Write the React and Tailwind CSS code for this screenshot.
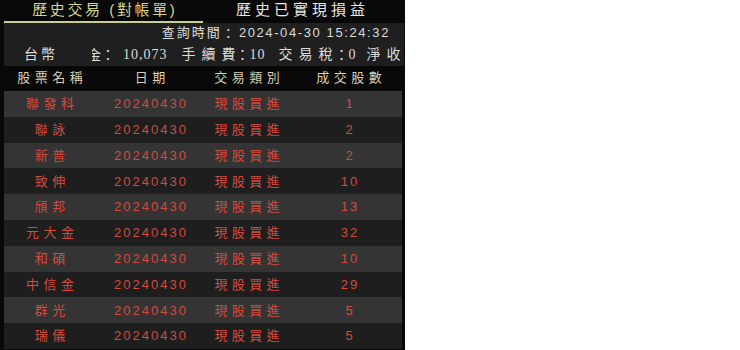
import React from 'react';

const rows = [
  { name: '聯發科', date: '20240430', type: '現股買進', qty: '1' },
  { name: '聯詠', date: '20240430', type: '現股買進', qty: '2' },
  { name: '新普', date: '20240430', type: '現股買進', qty: '2' },
  { name: '致伸', date: '20240430', type: '現股買進', qty: '10' },
  { name: '頎邦', date: '20240430', type: '現股買進', qty: '13' },
  { name: '元大金', date: '20240430', type: '現股買進', qty: '32' },
  { name: '和碩', date: '20240430', type: '現股買進', qty: '10' },
  { name: '中信金', date: '20240430', type: '現股買進', qty: '29' },
  { name: '群光', date: '20240430', type: '現股買進', qty: '5' },
  { name: '瑞儀', date: '20240430', type: '現股買進', qty: '5' },
];

const sans = "font-['Liberation_Sans','Noto_Sans_CJK_TC',sans-serif]";
const cjk = "font-['Noto_Sans_CJK_TC',sans-serif]";
const serif = "font-['Liberation_Serif','Noto_Sans_CJK_TC',serif]";
const cols = 'grid grid-cols-[92px_108px_86px_112px]';

// label with wide spacing between its own characters, none after the last one
function Label({ text, className = '' }) {
  return (
    <span className={className}>
      <span className="tracking-[6px]">{text.slice(0, -1)}</span>
      {text.slice(-1)}
    </span>
  );
}

export default function App() {
  return (
    <div className={`flex w-[740px] h-[350px] bg-white ${sans}`}>
      <div className="w-[405px] h-[350px] bg-[#080808] pl-1 overflow-hidden flex flex-col">
        {/* Tabs */}
        <div className="flex h-[23px] w-[398px]">
          <div className="w-[199px] flex flex-col">
            <div className="h-[21px] flex items-center justify-center text-[15px] text-[#d6d48e] tracking-[2.6px] mr-[-2.6px]">
              歷史交易 (對帳單)
            </div>
            <div className="h-[2px] bg-[#cfcd8e]" />
          </div>
          <div className="w-[199px] h-[21px] flex items-center justify-center text-[15px] text-[#e6e6e6] tracking-[4px] mr-[-4px]">
            歷史已實現損益
          </div>
        </div>

        {/* Query info */}
        <div className="w-[400px] h-[43px] bg-[#1f1f1f] flex flex-col text-[#dcdcdc]">
          <div className="h-[20px] flex items-center justify-end pr-[14px] text-[13px]">
            <span className="tracking-[2px]">查詢時間</span>
            <span className={cjk}>：</span>
            <span className="tracking-[1.6px] ml-[4px]">2024-04-30 15:24:32</span>
          </div>
          <div className="h-[23px] flex items-center">
            <div className="w-[88px] pl-[20px] text-[14px] tracking-[3px]">台幣</div>
            <div className="flex-1 overflow-hidden">
              <div className="flex items-center whitespace-nowrap ml-[-5px] text-[14px]">
                <span className={cjk}>金</span>
                <span className={cjk}>：</span>
                <span className={`${serif} ml-[8px] tracking-[1px]`}>10,073</span>
                <Label text="手續費" className="ml-[14px]" />
                <span className={cjk}>：</span>
                <span className={`${serif} tracking-[1px]`}>10</span>
                <Label text="交易稅" className="ml-[13px]" />
                <span className={`${cjk} ml-[2px]`}>：</span>
                <span className={`${serif} tracking-[1px]`}>0</span>
                <span className="ml-[10px] tracking-[6px]">淨收付</span>
              </div>
            </div>
          </div>
        </div>

        {/* Header */}
        <div className={`${cols} w-[400px] h-[24px] items-center text-[13px] text-[#dacfb3]`}>
          <div className="text-center"><span className="tracking-[4.5px] mr-[-4.5px]">股票名稱</span></div>
          <div className="text-center"><span className="tracking-[4.5px] mr-[-4.5px]">日期</span></div>
          <div className="text-center"><span className="tracking-[4.5px] mr-[-4.5px]">交易類別</span></div>
          <div className="text-center pl-[6px]"><span className="tracking-[4.5px] mr-[-4.5px]">成交股數</span></div>
        </div>

        {/* Rows */}
        <div className="flex flex-col w-[398px] mt-[1px]">
          {rows.map((r, i) => (
            <div
              key={r.name}
              className={`${cols} h-[25.8px] shrink-0 items-center text-[13px] text-[#d24b3d] ${
                i % 2 === 0 ? 'bg-[#343434]' : 'bg-[#1e1e1e]'
              }`}
            >
              <div className="text-center"><span className="tracking-[4.5px] mr-[-4.5px]">{r.name}</span></div>
              <div className="text-center"><span className="tracking-[2px] mr-[-2px]">{r.date}</span></div>
              <div className="text-center"><span className="tracking-[4.3px] mr-[-4.3px]">{r.type}</span></div>
              <div className="text-center pl-[6px]"><span className="tracking-[2px] mr-[-2px]">{r.qty}</span></div>
            </div>
          ))}
        </div>
      </div>
    </div>
  );
}
